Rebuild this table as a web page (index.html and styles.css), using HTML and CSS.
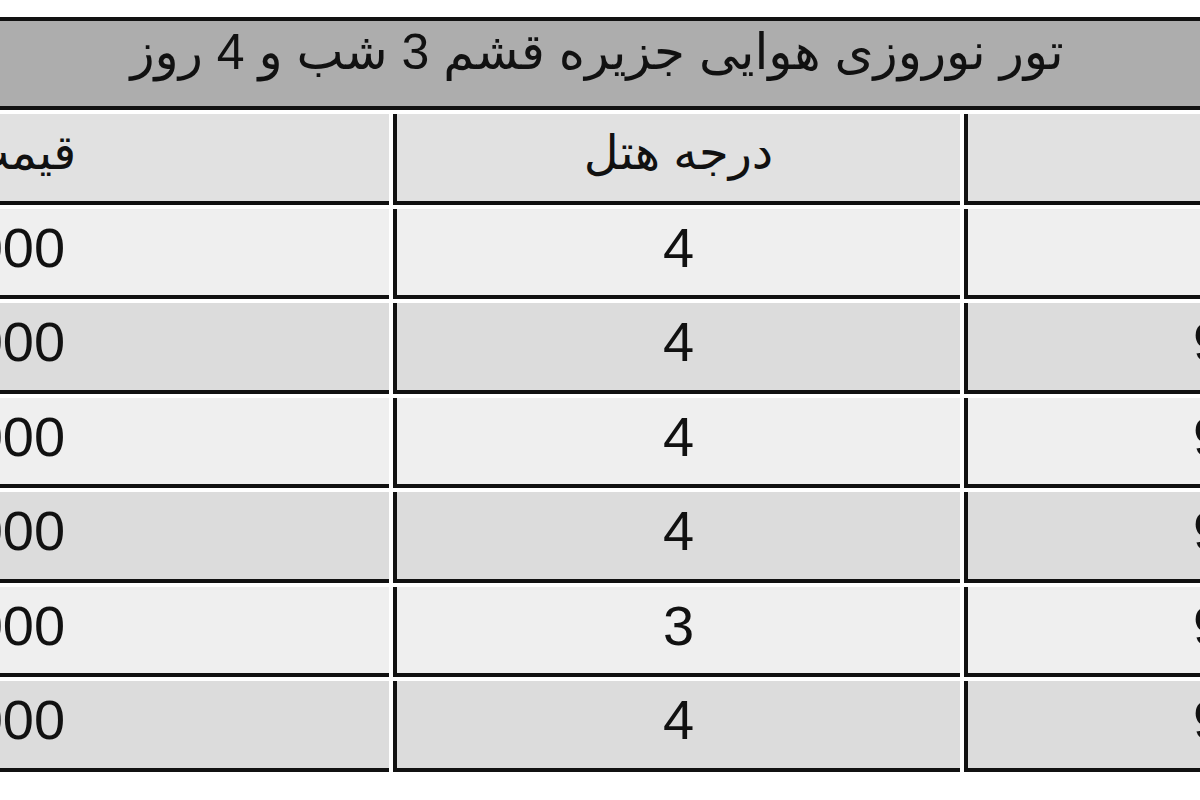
FILE: index.html
```html
<!DOCTYPE html>
<html lang="fa">
<head>
<meta charset="utf-8">
<title>تور نوروزی هوایی جزیره قشم</title>
<link rel="stylesheet" href="styles.css">
</head>
<body>
<div class="viewport">
  <table class="tour" dir="rtl">
    <colgroup>
      <col class="col-date">
      <col class="col-grade">
      <col class="col-price">
    </colgroup>
    <tr>
      <th class="title" colspan="3">تور نوروزی هوایی جزیره قشم 3 شب و 4 روز</th>
    </tr>
    <tr class="head">
      <th>تاریخ</th>
      <th>درجه هتل</th>
      <th>قیمت (تومان)</th>
    </tr>
    <tr class="light">
      <td>هر روز</td>
      <td>4</td>
      <td>1,290,000</td>
    </tr>
    <tr class="dark">
      <td>94/12/25</td>
      <td>4</td>
      <td>1,190,000</td>
    </tr>
    <tr class="light">
      <td>94/12/26</td>
      <td>4</td>
      <td>1,250,000</td>
    </tr>
    <tr class="dark">
      <td>94/12/27</td>
      <td>4</td>
      <td>1,350,000</td>
    </tr>
    <tr class="light">
      <td>94/12/28</td>
      <td>3</td>
      <td>1,090,000</td>
    </tr>
    <tr class="dark">
      <td>94/12/29</td>
      <td>4</td>
      <td>1,390,000</td>
    </tr>
  </table>
</div>
</body>
</html>
```
FILE: styles.css
```css
html, body {
  margin: 0;
  padding: 0;
  background: #ffffff;
}

.viewport {
  width: 1200px;
  height: 800px;
  overflow: hidden;
}

.tour {
  border-collapse: separate;
  border-spacing: 4px;
  margin: 13px 0 0 -516px;
  width: 2156px;
  table-layout: fixed;
  font-family: "Liberation Sans", "DejaVu Sans", sans-serif;
  font-size: 56px;
  font-weight: normal;
  color: #111111;
}

.col-date {
  width: 672px;
}

.col-grade {
  width: 567px;
}

.col-price {
  width: 901px;
}

.tour th,
.tour td {
  box-sizing: border-box;
  padding: 0 0 8px 0;
  text-align: center;
  vertical-align: middle;
  font-weight: normal;
  line-height: 60px;
  white-space: nowrap;
  border-left: 4px solid #111111;
  border-bottom: 4px solid #111111;
  height: 90.5px;
}

.tour .title {
  background: #adadad;
  border-top: 4px solid #111111;
  height: 93px;
  font-size: 50px;
  padding-left: 66px;
  padding-bottom: 24px;
}

.head th {
  background: #e1e1e1;
  font-size: 48px;
}

.light td {
  background: #efefef;
}

.dark td {
  background: #dcdcdc;
}
```
